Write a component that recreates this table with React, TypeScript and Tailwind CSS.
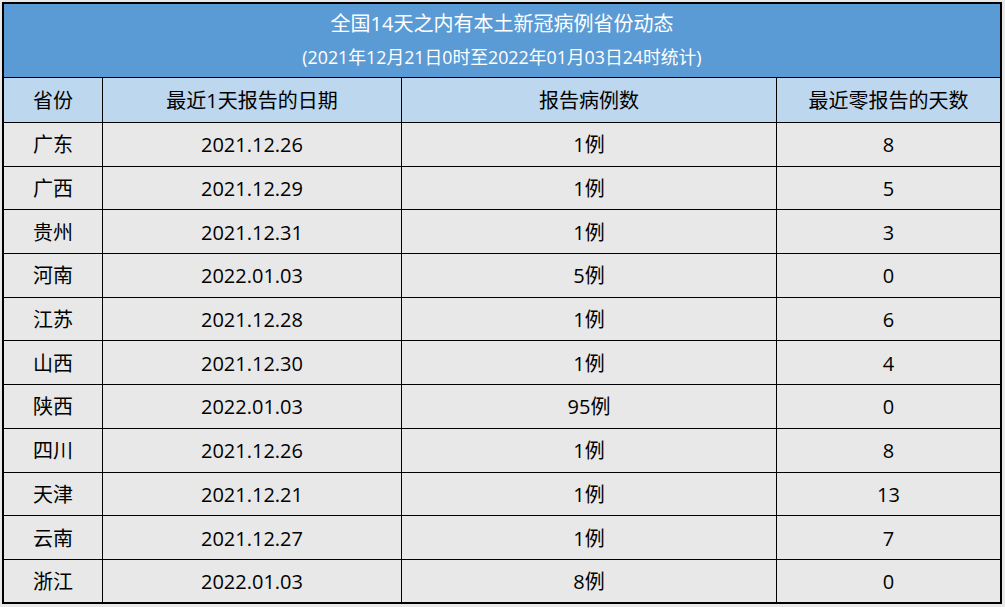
import React from "react";

const rows: [string, string, string, string][] = [
  ["广东", "2021.12.26", "1例", "8"],
  ["广西", "2021.12.29", "1例", "5"],
  ["贵州", "2021.12.31", "1例", "3"],
  ["河南", "2022.01.03", "5例", "0"],
  ["江苏", "2021.12.28", "1例", "6"],
  ["山西", "2021.12.30", "1例", "4"],
  ["陕西", "2022.01.03", "95例", "0"],
  ["四川", "2021.12.26", "1例", "8"],
  ["天津", "2021.12.21", "1例", "13"],
  ["云南", "2021.12.27", "1例", "7"],
  ["浙江", "2022.01.03", "8例", "0"],
];

const headers = ["省份", "最近1天报告的日期", "报告病例数", "最近零报告的天数"];

export default function App() {
  return (
    <div
      className="w-[1005px] h-[607px] bg-[#e8e8e8] pt-[2px] pl-[2px] text-black"
      style={{ fontFamily: '"Open Sans", "Noto Sans CJK SC", sans-serif' }}
    >
      <div className="w-[1000px] h-[602px] border-2 border-black bg-black grid grid-cols-[98px_298px_374px_223px] gap-px content-start">
        <div className="col-span-4 h-[73px] bg-[#5b9bd5] text-white flex flex-col items-center">
          <div className="h-[38px] flex items-center text-[20px] leading-none pt-[1px]">全国14天之内有本土新冠病例省份动态</div>
          <div className="h-[34px] flex items-center text-[17.8px] leading-none pb-[2px]">(2021年12月21日0时至2022年01月03日24时统计)</div>
        </div>
        {headers.map((h) => (
          <div key={h} className="h-[44px] bg-[#bdd7ee] flex items-center justify-center text-[20px] leading-none pt-[2px]">
            {h}
          </div>
        ))}
        {rows.map((r, i) =>
          r.map((c, j) => (
            <div
              key={`${i}-${j}`}
              className={`${i === rows.length - 1 ? "h-[42px]" : "h-[42.7px]"} bg-[#e8e8e8] flex items-center justify-center text-[20px] leading-none pt-[2px]`}
            >
              {c}
            </div>
          ))
        )}
      </div>
    </div>
  );
}
